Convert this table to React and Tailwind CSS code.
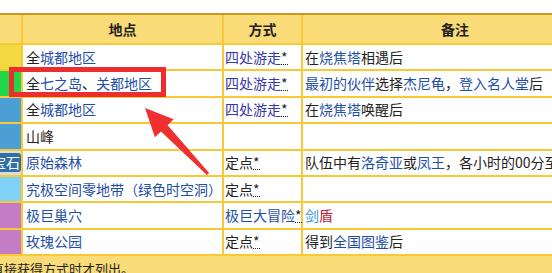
const FONT = { fontFamily: '"Noto Sans CJK SC", "Noto Sans", sans-serif' };

const L = ({ children }) => <span className="text-[#1e4ea6]">{children}</span>;
const Star = () => (
  <span className="text-[#222] border-b border-dotted border-[#222] leading-[14px]">*</span>
);
const Walk = () => (
  <>
    <span className="text-[#3438a8]">四处游走</span>
    <Star />
  </>
);
const Fixed = () => (
  <>
    <span className="text-[#222]">定点</span>
    <Star />
  </>
);

const rows = [
  {
    color: "bg-[#f4d83f]",
    place: <><span>全</span><L>城都地区</L></>,
    way: <Walk />,
    note: <><span>在</span><L>烧焦塔</L><span>相遇后</span></>,
  },
  {
    color: "bg-[#22d84a]",
    place: <><span>全</span><L>七之岛</L><span>、</span><L>关都地区</L></>,
    way: <Walk />,
    note: <><L>最初的伙伴</L><span>选择</span><L>杰尼龟</L><span>，</span><L>登入名人堂</L><span>后</span></>,
  },
  {
    color: "bg-[#4b9fd5]",
    place: <><span>全</span><L>城都地区</L></>,
    way: <Walk />,
    note: <><span>在</span><L>烧焦塔</L><span>唤醒后</span></>,
  },
  {
    color: "bg-[#4b9fd5]",
    place: <span className="text-[#2a2218]">山峰</span>,
    way: null,
    note: null,
  },
  {
    color: "bg-[#dcdcdc]",
    badge: true,
    place: <L>原始森林</L>,
    way: <Fixed />,
    note: <><span>队伍中有</span><L>洛奇亚</L><span>或</span><L>凤王</L><span>，各小时的00分至23分之间</span></>,
  },
  {
    color: "bg-[#7fd2f6]",
    place: <L>究极空间零地带（绿色时空洞）</L>,
    way: <Fixed />,
    note: null,
  },
  {
    color: "bg-[#c47cc4]",
    place: <L>极巨巢穴</L>,
    way: <><L>极巨大冒险</L><Star /></>,
    note: <><span className="text-[#2f97d8]">剑</span><span className="text-[#c4173c]">盾</span></>,
  },
  {
    color: "bg-[#c47cc4]",
    place: <L>玫瑰公园</L>,
    way: <Fixed />,
    note: <><span>得到</span><L>全国图鉴</L><span>后</span></>,
  },
];

const Row = ({ r }) => (
  <div className="flex h-[26.375px] border-b-2 border-[#f9c935] bg-white text-[14px] text-[#222] whitespace-nowrap">
    <div className={`w-[23px] shrink-0 border-r-2 border-[#f9c935] ${r.color} flex items-center justify-end overflow-hidden`}>
      {r.badge && (
        <span className="shrink-0 bg-[#3070a8] text-white rounded-[3px] px-[1px] h-[19px] leading-[19px] text-[14px]">
          蓝宝石
        </span>
      )}
    </div>
    <div className="w-[201px] shrink-0 border-r-2 border-[#f9c935] pl-[3px] flex items-center">{r.place}</div>
    <div className="w-[79px] shrink-0 border-r-2 border-[#f9c935] pl-[1px] flex items-center">{r.way}</div>
    <div className="w-[304px] shrink-0 pl-[2px] flex items-center">{r.note}</div>
  </div>
);

export default function App() {
  return (
    <div className="relative w-[552px] h-[273px] overflow-hidden bg-white" style={FONT}>
      <div className="h-[13px]" />
      <div className="w-[607px] border-t-2 border-[#c8981e]">
        <div className="flex h-[30px] border-b-2 border-[#f9c935] bg-[#f9dc78] text-[14px] font-bold text-[#222]">
          <div className="w-[23px] shrink-0 border-r-2 border-[#f9c935]" />
          <div className="w-[201px] shrink-0 border-r-2 border-[#f9c935] flex items-center justify-center">地点</div>
          <div className="w-[79px] shrink-0 border-r-2 border-[#f9c935] flex items-center justify-center">方式</div>
          <div className="w-[304px] shrink-0 flex items-center justify-center">备注</div>
        </div>
        {rows.map((r, i) => (
          <Row key={i} r={r} />
        ))}
        <div className="h-[40px] bg-[#f9dc78] pt-[3px] text-[13px] text-[#222] whitespace-nowrap">
          <span className="ml-[-9px]">直接获得方式时才列出。</span>
        </div>
      </div>

      <div className="absolute left-[9px] top-[67px] w-[157px] h-[30px] border-[5px] border-[#ee2e2e]" />
      <svg className="absolute left-0 top-0" width="552" height="273" viewBox="0 0 552 273">
        <polygon
          points="145,108 173.7,119.3 167.6,125.2 209.1,173 206.9,175 161,131.4 154.9,137.3"
          fill="#ee3030"
        />
      </svg>
    </div>
  );
}
